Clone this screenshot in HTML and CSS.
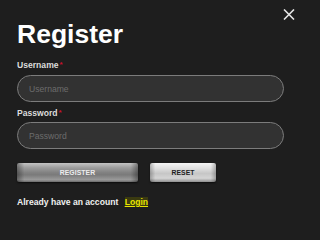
FILE: index.html
```html
<!DOCTYPE html>
<html>
<head>
<meta charset="utf-8">
<link rel="stylesheet" href="styles.css">
</head>
<body>
<div class="dialog">
  <button class="close" aria-label="Close">
    <svg width="12" height="11" viewBox="0 0 12 11"><path d="M1 0.5 L11 10.5 M11 0.5 L1 10.5" stroke="#e6e6e6" stroke-width="1.6" fill="none"/></svg>
  </button>
  <h1 class="title">Register</h1>
  <form class="form">
    <label class="label">Username<span class="req">*</span></label>
    <input class="field" type="text" placeholder="Username">
    <label class="label label-2">Password<span class="req">*</span></label>
    <input class="field" type="password" placeholder="Password">
    <div class="actions">
      <button type="button" class="btn btn-register">REGISTER</button>
      <button type="button" class="btn btn-reset">RESET</button>
    </div>
    <p class="account">Already have an account <a class="login" href="#">Login</a></p>
  </form>
</div>
</body>
</html>
```
FILE: styles.css
```css
html, body {
  margin: 0;
  padding: 0;
  background: #1e1e1e;
  width: 300px;
  height: 223px;
  overflow: hidden;
}
.dialog {
  position: relative;
  padding: 19px 0 0 17px;
  font-family: "Liberation Sans", Arial, sans-serif;
  color: #fff;
}
.close {
  position: absolute;
  top: 8.5px;
  left: 283px;
  padding: 0;
  margin: 0;
  border: 0;
  background: none;
  line-height: 0;
}
.title {
  margin: 0;
  font-size: 26.5px;
  line-height: 30px;
  font-weight: bold;
  color: #fff;
}
.form {
  display: flex;
  flex-direction: column;
  margin-top: 11px;
}
.label {
  font-size: 8.6px;
  line-height: 10px;
  font-weight: bold;
  color: #dcdcdc;
  margin-bottom: 4px;
}
.label-2 {
  margin-top: 6px;
  margin-bottom: 3px;
}
.req {
  color: #c8102e;
  font-size: 8px;
  position: relative;
  top: -1px;
  margin-left: 1px;
}
.field {
  box-sizing: border-box;
  width: 267px;
  height: 27px;
  margin: 0;
  border: 1.5px solid #7c7c7c;
  border-radius: 14px;
  background: #323232;
  padding: 0 0 0 11px;
  font-family: "Liberation Sans", Arial, sans-serif;
  font-size: 8.6px;
  color: #ccc;
  outline: none;
}
.field::placeholder {
  color: #6c6c6c;
}
.actions {
  display: flex;
  gap: 12px;
  margin-top: 14px;
}
.btn {
  box-sizing: border-box;
  height: 19px;
  margin: 0;
  padding: 0;
  border: 0;
  border-radius: 2px;
  font-family: "Liberation Sans", Arial, sans-serif;
  font-size: 6.8px;
  font-weight: bold;
  letter-spacing: 0.1px;
  box-shadow: 0 1px 2px rgba(0,0,0,0.6);
}
.btn-register {
  width: 121px;
  color: #ececec;
  background:
    linear-gradient(90deg, rgba(0,0,0,0.35), rgba(0,0,0,0) 6%, rgba(0,0,0,0) 94%, rgba(0,0,0,0.35)),
    linear-gradient(#c4c4c4, #9c9c9c 25%, #828282 50%, #7a7a7a 62%, #9a9a9a 88%, #6a6a6a);
}
.btn-reset {
  width: 66px;
  color: #1e1e1e;
  background:
    linear-gradient(90deg, rgba(0,0,0,0.25), rgba(0,0,0,0) 8%, rgba(0,0,0,0) 92%, rgba(0,0,0,0.25)),
    linear-gradient(#f6f6f6, #dedede 30%, #c6c6c6 55%, #d4d4d4 80%, #8e8e8e);
}
.account {
  margin: 15px 0 0;
  font-size: 8.6px;
  line-height: 10px;
  font-weight: bold;
  color: #f0f0f0;
}
.login {
  margin-left: 4px;
  color: #e8e400;
  text-decoration: underline;
  background: #3a3a10;
}
```
